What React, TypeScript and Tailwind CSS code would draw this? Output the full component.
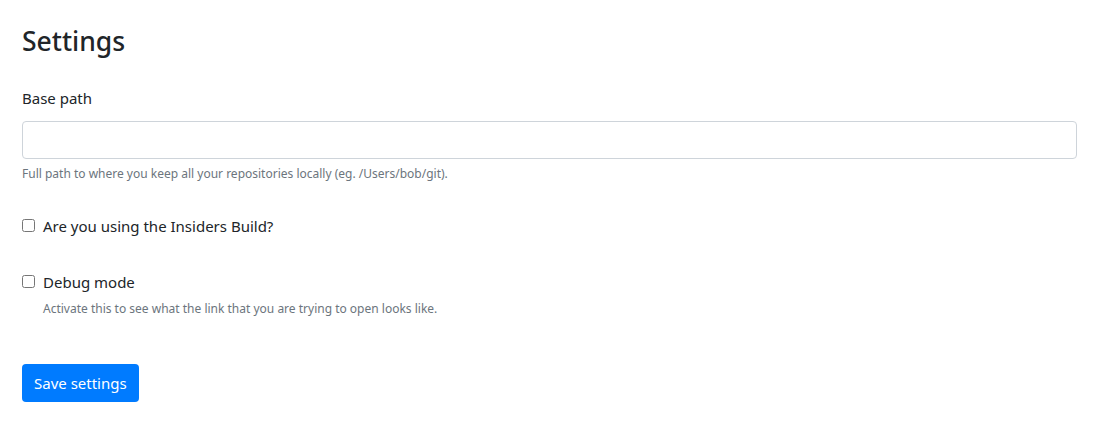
import { useState } from "react";

const font = { fontFamily: '"Noto Sans", "Open Sans", sans-serif' };

export default function App() {
  const [basePath, setBasePath] = useState("");
  const [insiders, setInsiders] = useState(false);
  const [debug, setDebug] = useState(false);

  return (
    <div style={font} className="min-h-screen bg-white text-[#212529] pl-[22px] pr-[25px] pt-[26px]">
      <h2 className="text-[26.5px] font-medium leading-[1.2] mb-[28px]">Settings</h2>

      <div className="mb-[30px]">
        <label className="block text-[15px] leading-[24px] mb-[11px]">Base path</label>
        <input
          type="text"
          value={basePath}
          onChange={(e) => setBasePath(e.target.value)}
          className="block w-full h-[38px] border border-[#ced4da] rounded-[4px] px-3 outline-none"
        />
        <p className="text-[12px] text-[#6c757d] mt-[6px] leading-[18px]">
          Full path to where you keep all your repositories locally (eg. /Users/bob/git).
        </p>
      </div>

      <div className="mb-[32px]">
        <label className="flex items-center gap-[8px] text-[15px] leading-[24px] pt-[1px]">
          <input type="checkbox" checked={insiders} onChange={(e) => setInsiders(e.target.checked)} className="w-[13px] h-[13px] m-0" />
          Are you using the Insiders Build?
        </label>
      </div>

      <div className="mb-[46px]">
        <label className="flex items-center gap-[8px] text-[15px] leading-[24px]">
          <input type="checkbox" checked={debug} onChange={(e) => setDebug(e.target.checked)} className="w-[13px] h-[13px] m-0" />
          Debug mode
        </label>
        <p className="text-[12px] text-[#6c757d] ml-[21px] mt-[6px] leading-[18px]">
          Activate this to see what the link that you are trying to open looks like.
        </p>
      </div>

      <button className="h-[38px] px-[12px] rounded-[4px] bg-[#007bff] text-white text-[15px]">Save settings</button>
    </div>
  );
}
